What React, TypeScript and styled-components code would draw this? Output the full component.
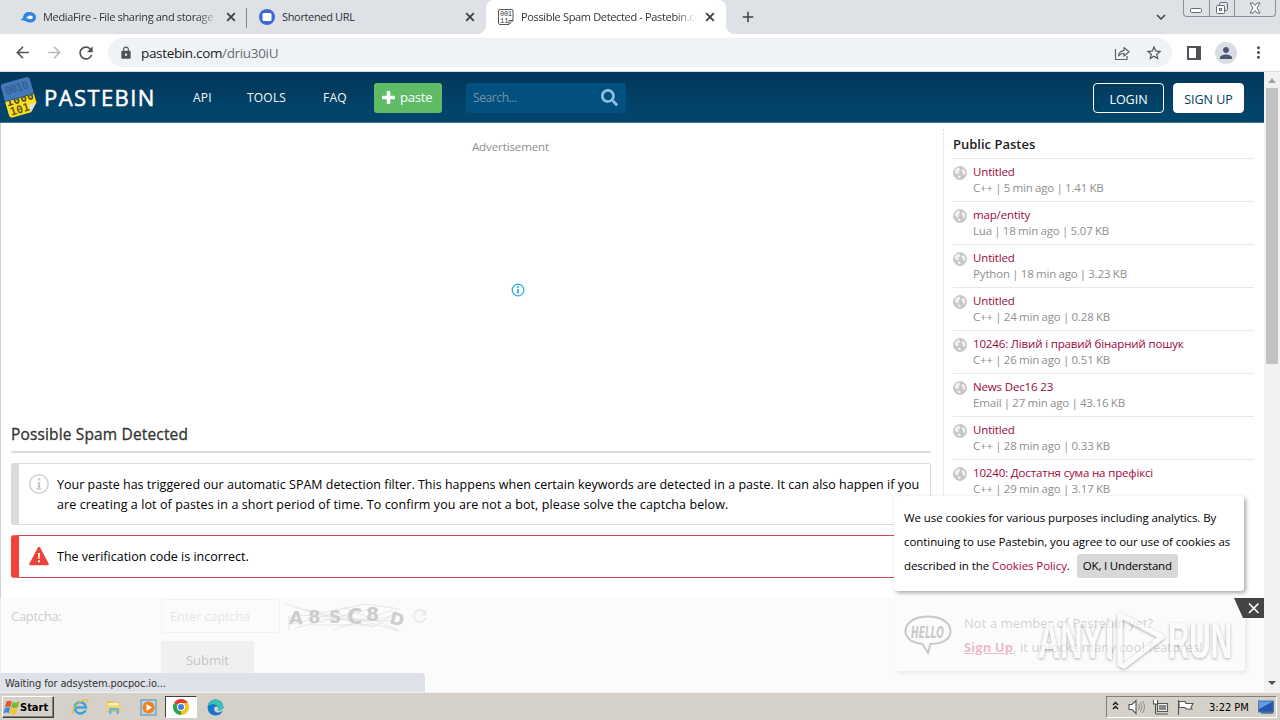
import React from 'react';
import styled, { createGlobalStyle } from 'styled-components';
import {
  MdAdd,
  MdArrowBack,
  MdArrowForward,
  MdKeyboardArrowDown,
  MdLock,
  MdMoreVert,
  MdPerson,
  MdRefresh,
  MdStarBorder,
} from 'react-icons/md';
import { FaSearch } from 'react-icons/fa';

const GlobalStyle = createGlobalStyle`
  * {
    box-sizing: border-box;
  }
  body {
    margin: 0;
    overflow: hidden;
    font-family: 'Open Sans', 'Noto Sans', sans-serif;
    color: #000;
  }
  svg {
    display: block;
    flex-shrink: 0;
  }
`;

const Screen = styled.div`
  position: relative;
  width: 1280px;
  height: 720px;
  display: flex;
  flex-direction: column;
  overflow: hidden;
  background: #fff;
  white-space: nowrap;
`;

/* ---------- browser chrome ---------- */

const TabStrip = styled.div`
  height: 34px;
  flex-shrink: 0;
  display: flex;
  align-items: flex-start;
  padding-left: 8px;
  background: #dee1e6;
`;

const StyledTab = styled.div<{ $active?: boolean }>`
  position: relative;
  width: ${(p) => (p.$active ? 240 : 239)}px;
  height: 34px;
  display: flex;
  align-items: center;
  padding: 0 11px 0 12px;
  border-radius: 8px 8px 0 0;
  background: ${(p) => (p.$active ? '#fff' : 'transparent')};

  &::before,
  &::after {
    content: '';
    display: ${(p) => (p.$active ? 'block' : 'none')};
    position: absolute;
    bottom: 0;
    width: 8px;
    height: 8px;
  }
  &::before {
    left: -8px;
    background: radial-gradient(circle at 0 0, transparent 7.5px, #fff 8px);
  }
  &::after {
    right: -8px;
    background: radial-gradient(circle at 100% 0, transparent 7.5px, #fff 8px);
  }
`;

const TabTitle = styled.span<{ $fade?: boolean }>`
  flex: 1;
  margin: 0 8px 0 7px;
  overflow: hidden;
  font-size: 11px;
  line-height: 16px;
  letter-spacing: -0.34px;
  color: #2f3236;
  ${(p) => p.$fade && 'mask-image: linear-gradient(to right, #000 88%, transparent);'}
`;

const TabDivider = styled.div`
  position: absolute;
  right: 0;
  top: 8px;
  width: 1px;
  height: 20px;
  background: #85898f;
`;

const NewTab = styled(MdAdd)`
  width: 18px;
  height: 18px;
  margin: 8px 0 0 13px;
  color: #3c4043;
`;

const TabSearch = styled(MdKeyboardArrowDown)`
  width: 18px;
  height: 18px;
  margin: 8px 13px 0 auto;
  color: #3c4043;
`;

const WindowButtons = styled.div`
  display: flex;
  height: 17px;
  margin-right: 4px;
  border: 1px solid #8c9098;
  border-top: none;
  border-radius: 0 0 4px 4px;
`;

const WindowButton = styled.div<{ $wide?: boolean }>`
  width: ${(p) => (p.$wide ? 41 : 25)}px;
  display: flex;
  align-items: center;
  justify-content: center;
  & + & {
    border-left: 1px solid #8c9098;
  }
`;

const Toolbar = styled.div`
  height: 38px;
  flex-shrink: 0;
  display: flex;
  align-items: center;
  padding: 0 6px 0 12px;
  border-bottom: 1px solid #d5dade;
  color: #4f5357;
`;

const ToolButton = styled.div<{ $muted?: boolean }>`
  width: 32px;
  display: flex;
  justify-content: center;
  color: ${(p) => (p.$muted ? '#b5b7ba' : 'inherit')};
  &:first-child {
    width: 20px;
    margin-right: 6px;
  }
`;

const AddressBar = styled.div`
  flex: 1;
  height: 29px;
  display: flex;
  align-items: center;
  margin: 0 6px;
  padding: 0 2px 0 11px;
  border-radius: 15px;
  background: #f0f3f6;
`;

const Url = styled.span`
  flex: 1;
  margin-left: 8px;
  font-size: 13.5px;
  letter-spacing: -0.34px;
  color: #202124;
  span {
    color: #686c71;
  }
`;

const Avatar = styled.div`
  width: 22px;
  height: 22px;
  display: flex;
  align-items: center;
  justify-content: center;
  border-radius: 50%;
  background: #dadde4;
  color: #4b5576;
`;

/* ---------- site ---------- */

const Viewport = styled.div`
  position: relative;
  height: 620px;
  flex-shrink: 0;
  display: flex;
`;

const Page = styled.div`
  position: relative;
  width: 1264px;
  overflow: hidden;
`;

const Header = styled.header`
  height: 51px;
  display: flex;
  align-items: center;
  padding: 1px 20px 0 0;
  background: linear-gradient(#02385b, #033d61 45%, #024268 55%, #02456b);
  border-bottom: 1px solid #48718c;
`;

const Brand = styled.div`
  width: 149px;
  margin: -1px 0 0 3px;
  font-size: 22px;
  line-height: 30px;
  letter-spacing: 1.4px;
  color: #fff;
  -webkit-text-stroke: 0.5px #fff;
`;

const NavLink = styled.a<{ $width: number }>`
  width: ${(p) => p.$width}px;
  margin-top: -1px;
  font-size: 12px;
  letter-spacing: 0.2px;
  color: #f3f8fb;
`;

const PasteButton = styled.button`
  width: 68px;
  height: 30px;
  display: flex;
  align-items: center;
  padding: 0 0 1px 8px;
  gap: 5px;
  border: none;
  border-radius: 3px;
  background: #5fbb66;
  color: #fff;
  font: 13px 'Open Sans', sans-serif;
  letter-spacing: -0.2px;
`;

const SearchBox = styled.div`
  width: 160px;
  height: 30px;
  display: flex;
  align-items: center;
  justify-content: space-between;
  margin-left: 24px;
  padding: 0 8px 1px 7px;
  border-radius: 3px;
  background: #01507f;
  color: #7893a5;
  font-size: 12px;
  letter-spacing: -0.4px;
`;

const AuthButtons = styled.div`
  display: flex;
  gap: 9px;
  margin-left: auto;
`;

const AuthButton = styled.button<{ $filled?: boolean }>`
  width: 71px;
  height: 30px;
  padding: 3px 0 0;
  border: 1px solid #fff;
  border-radius: 4px;
  background: ${(p) => (p.$filled ? '#fff' : 'transparent')};
  color: ${(p) => (p.$filled ? '#033a5c' : '#fff')};
  font: 12.5px 'Open Sans', sans-serif;
`;

const Content = styled.div`
  height: 569px;
  display: flex;
  border-left: 1px solid #cfd2d6;
`;

const Main = styled.main`
  width: 942px;
  padding: 0 12px 0 10px;
`;

const AdSlot = styled.div`
  height: 301px;
  display: flex;
  flex-direction: column;
  align-items: center;
  padding: 16px 0 0 79px;
  font-size: 11.5px;
  line-height: 16px;
  letter-spacing: -0.1px;
  color: #8e8e8e;
`;

const AdInfo = styled.svg`
  margin: 128px 0 0 15px;
`;

const Title = styled.h1`
  height: 29px;
  margin: 0 0 10px;
  border-bottom: 2px solid #dcdcdc;
  font-size: 15.5px;
  font-weight: 400;
  line-height: 21px;
  letter-spacing: 0.15px;
  color: #333;
  -webkit-text-stroke: 0.3px #333;
`;

const Notice = styled.div<{ $error?: boolean }>`
  display: flex;
  align-items: flex-start;
  margin-bottom: 10px;
  padding: 11px 0 ${(p) => (p.$error ? 10 : 9)}px 10px;
  border: 1px solid ${(p) => (p.$error ? '#cf4550' : '#dbdbdb')};
  border-left: 8px solid ${(p) => (p.$error ? '#f44336' : '#dbdbdb')};
  border-radius: 3px;
  font-size: 12.5px;
  line-height: 20px;
  svg {
    margin-top: -1px;
  }
`;

const NoticeText = styled.div`
  margin-left: 8px;
`;

const NoticeLine = styled.div<{ $tracking?: number }>`
  letter-spacing: ${(p) => p.$tracking ?? 0}px;
`;

const CaptchaRow = styled.div`
  display: flex;
  align-items: center;
  height: 34px;
  margin-top: 21px;
  font-size: 13px;
  color: #666;
`;

const CaptchaLabel = styled.label`
  width: 150px;
  letter-spacing: -0.3px;
`;

const CaptchaInput = styled.div`
  width: 119px;
  height: 34px;
  margin-right: 3px;
  padding: 7px 8px;
  border: 1px solid #e2e2e2;
  border-radius: 3px;
  line-height: 18px;
  letter-spacing: -0.25px;
  color: #b5b5b5;
`;

const SubmitButton = styled.button`
  display: block;
  width: 93px;
  height: 38px;
  margin: 8px 0 0 150px;
  padding: 0;
  border: none;
  border-radius: 3px;
  background: #dadada;
  color: #444;
  font: 13px 'Open Sans', sans-serif;
`;

const Sidebar = styled.aside`
  width: 311px;
  height: 380px;
  margin-top: 6px;
  padding-left: 9px;
  border-left: 1px dotted #d8d8d8;
`;

const SidebarTitle = styled.div`
  height: 29px;
  padding-top: 5px;
  font-size: 13px;
  font-weight: 600;
  line-height: 20px;
  color: #222;
`;

const PasteItem = styled.div`
  height: 43px;
  display: flex;
  padding-top: 5px;
  border-top: 1px solid #e8e8e8;
  font-size: 11.5px;
  line-height: 16px;
  letter-spacing: -0.15px;
`;

const PasteGlobe = styled.div`
  padding-top: 2px;
`;

const PasteBody = styled.div`
  margin-left: 6px;
`;

const PasteLink = styled.a`
  display: block;
  color: #9b0838;
`;

const PasteMeta = styled.div`
  letter-spacing: -0.15px;
  word-spacing: -0.5px;
  color: #8f8f8f;
`;

const AdOverlay = styled.div`
  position: absolute;
  left: 0;
  right: 0;
  top: 526px;
  bottom: 0;
  background: rgba(250, 250, 250, 0.7);
`;

const OverlayClose = styled.svg`
  position: absolute;
  right: 0;
  top: 0;
`;

const JoinCard = styled.div`
  position: absolute;
  left: 895px;
  top: 527px;
  width: 350px;
  height: 72px;
  display: flex;
  align-items: center;
  padding-left: 9px;
  border-radius: 3px;
  background: #fff;
  box-shadow: 2px 2px 4px rgba(0, 0, 0, 0.25);
  font-size: 13px;
  line-height: 24px;
  letter-spacing: 0.08px;
  color: #777;
`;

const JoinText = styled.div`
  margin-left: 12px;
  a {
    color: #d0245c;
    font-weight: 700;
    text-decoration: underline;
  }
`;

const CookieCard = styled.div`
  position: absolute;
  left: 894px;
  top: 424px;
  width: 350px;
  height: 95px;
  padding: 10px;
  border-radius: 3px;
  background: #fff;
  box-shadow: 2px 2px 4px rgba(0, 0, 0, 0.35);
  font-size: 11.5px;
  line-height: 24px;
  letter-spacing: -0.07px;
  a {
    color: #a8053c;
  }
`;

const CookieLine = styled.div`
  display: flex;
  align-items: center;
`;

const AcceptButton = styled.button`
  width: 101px;
  height: 24px;
  margin-left: 7px;
  padding: 0 0 1px;
  border: none;
  border-radius: 3px;
  background: #d8d8d8;
  font: 11.5px 'Open Sans', sans-serif;
  letter-spacing: -0.17px;
`;

const StatusBubble = styled.div`
  position: absolute;
  left: 0;
  bottom: 0;
  width: 425px;
  height: 19px;
  padding-left: 5px;
  border-radius: 0 4px 0 0;
  background: #dee1e7;
  font: 11px/21px 'DejaVu Sans Condensed', 'DejaVu Sans', sans-serif;
  letter-spacing: -0.13px;
  color: #333;
`;

const ScrollBar = styled.div`
  width: 16px;
  display: flex;
  flex-direction: column;
  align-items: center;
  padding: 5px 0;
  background: #f1f1f1;
`;

const ScrollThumb = styled.div`
  width: 12px;
  height: 276px;
  margin: 5px 0 auto;
  background: #c1c1c1;
`;

const Watermark = styled.svg`
  position: absolute;
  left: 1030px;
  top: 604px;
`;

/* ---------- taskbar ---------- */

const TaskBar = styled.div`
  height: 28px;
  display: flex;
  align-items: center;
  padding: 1px 3px 0 2px;
  border-top: 1px solid #f4f2ee;
  background: #d5d0c8;
  font-family: 'DejaVu Sans Condensed', 'DejaVu Sans', sans-serif;
  font-size: 11px;
`;

const StartButton = styled.div`
  width: 52px;
  height: 22px;
  display: flex;
  align-items: center;
  border: 1px solid;
  border-color: #fff #404040 #404040 #fff;
  box-shadow: inset -1px -1px #808080;
  font-weight: 700;
`;

const TaskItem = styled.div<{ $active?: boolean }>`
  width: 32px;
  height: 22px;
  display: flex;
  align-items: center;
  justify-content: center;
  margin-left: ${(p) => (p.$active ? 1 : 2)}px;
  border: 1px solid;
  border-color: ${(p) => (p.$active ? '#404040 #fff #fff #404040' : 'transparent')};
  background: ${(p) => (p.$active ? '#fff' : 'transparent')};
`;

const QuickLaunch = styled.div`
  display: flex;
  margin-left: 8px;
`;

const Tray = styled.div`
  width: 171px;
  height: 22px;
  display: flex;
  align-items: center;
  margin-left: auto;
  border: 1px solid;
  border-color: #808080 #fff #fff #808080;
  padding: 0 1px 0 4px;
`;

const Clock = styled.span`
  margin: 0 9px 0 15px;
`;

const pastes = [
  { title: 'Untitled', meta: 'C++ | 5 min ago | 1.41 KB' },
  { title: 'map/entity', meta: 'Lua | 18 min ago | 5.07 KB' },
  { title: 'Untitled', meta: 'Python | 18 min ago | 3.23 KB' },
  { title: 'Untitled', meta: 'C++ | 24 min ago | 0.28 KB' },
  { title: '10246: Лівий і правий бінарний пошук', meta: 'C++ | 26 min ago | 0.51 KB' },
  { title: 'News Dec16 23', meta: 'Email | 27 min ago | 43.16 KB' },
  { title: 'Untitled', meta: 'C++ | 28 min ago | 0.33 KB' },
  { title: '10240: Достатня сума на префіксі', meta: 'C++ | 29 min ago | 3.17 KB' },
];

const CloseIcon = () => (
  <svg width="10" height="10" viewBox="0 0 10 10">
    <path d="M1.200 1.200l7.600 7.600M8.800 1.200L1.200 8.800" stroke="#3c4043" strokeWidth="1.800" />
  </svg>
);

const MediaFireIcon = () => (
  <svg width="16" height="16" viewBox="0 0 16 16">
    <path d="M0 10.500c2.500-.2 2.500-1 3.200-3C4 5 5.500 3 9 3c4 0 7 2 7 5.200S13.500 13.500 10 13.500c-2.500 0-3.500-1.200-5.500-1.700-1.700-.4-3-.2-4.500-1.300z" fill="#2d86dd" />
    <path d="M6 8.800c1.500-.2 2-2.300 4.300-2.300 1.500 0 2.500.7 2.500 1.800s-1 1.900-2.500 1.900C8.300 10.200 7.500 9 6 8.800z" fill="#fff" />
  </svg>
);

const ShortUrlIcon = () => (
  <svg width="16" height="16" viewBox="0 0 16 16">
    <circle cx="8" cy="8" r="8" fill="#3f68d4" />
    <rect x="3.500" y="4" width="9" height="8" rx="1.500" fill="#fff" />
  </svg>
);

const PastebinIcon = () => (
  <svg width="16" height="16" viewBox="0 0 16 16">
    <path d="M2 .5h11.500a1.500 1.500 0 0 1 1.500 1.500v9.500L11 15.500H2A1.500 1.500 0 0 1 .5 14V2A1.500 1.500 0 0 1 2 .5zM11 15v-3.500h4" fill="#fff" stroke="#555" />
    <g fill="#333" fontFamily="Liberation Mono, monospace" fontSize="7">
      <text x="2" y="7" textLength="12">001</text>
      <text x="2" y="13.500" textLength="8.500">11</text>
    </g>
  </svg>
);

const ShareIcon = () => (
  <svg width="16" height="16" viewBox="0 0 16 16" fill="none" stroke="#5f6368" strokeWidth="1.200">
    <path d="M1.500 4v10.500h11.500v-3.500" />
    <path d="M4.500 11c.4-3.500 2.500-5.200 5.500-5.400V2.500l5 4.300-5 4.200V8.300C7.500 8.300 6 9 4.500 11z" strokeLinejoin="round" />
  </svg>
);

const SidePanelIcon = () => (
  <svg width="14" height="14" viewBox="0 0 14 14">
    <path d="M1 1h12v12H1z" fill="none" stroke="#4f5357" strokeWidth="2" />
    <path d="M9 0h5v14H9z" fill="#4f5357" />
  </svg>
);

const PlusIcon = () => (
  <svg width="13" height="13" viewBox="0 0 13 13">
    <path d="M6.500 1v11M1 6.500h11" stroke="#fff" strokeWidth="3.600" strokeLinecap="round" />
  </svg>
);

const Logo = () => (
  <svg width="41" height="48" viewBox="0 0 41 48">
    <g transform="translate(0.500 0.500) rotate(-16 20 23)">
      <path d="M4 8a3 3 0 0 1 3-3h24a3 3 0 0 1 3 3v13H4z" fill="#4379bb" />
      <path d="M4 23h30v9l-8 8H7a3 3 0 0 1-3-3z" fill="#fbdf1e" />
      <path d="M34 32l-8 8v-6a2 2 0 0 1 2-2z" fill="#d9dfe4" />
      <g fontFamily="DejaVu Sans Mono, monospace" fontWeight="700" fontSize="11">
        <text x="7" y="16.500" fill="#356297" textLength="24">0010</text>
        <text x="5" y="28" fill="#4a4a28" textLength="28">1000</text>
        <text x="6" y="38" fill="#6a5a10" textLength="20">101</text>
      </g>
      <path d="M4 18.500h30v4H4z" fill="#4379bb" />
    </g>
  </svg>
);

const GlobeIcon = () => (
  <svg width="14" height="14" viewBox="0 0 14 14">
    <circle cx="7" cy="7" r="6.500" fill="#c6c6c6" stroke="#c9c9c9" />
    <path d="M1.800 5C3 2.500 4.800 1.500 7 1.500L6.500 3l.8 1-1.800 1.500.5 1.500L4.500 8.500 2 7zM9 3l2.500 1 1 3-1 2-1.500-.5L9.500 6 8.500 5zM4.500 9.500l3 .3L7.500 12 5.500 12z" fill="#f1f1f1" />
  </svg>
);

const InfoIcon = () => (
  <svg width="20" height="20" viewBox="0 0 20 20">
    <circle cx="10" cy="10" r="9.200" fill="none" stroke="#d2d2d2" strokeWidth="1.600" />
    <path d="M8 8.200h3.200v6h1.300v1.200h-5v-1.200H9V9.200H8zM9 4.300h2.200v2.200H9z" fill="#c8c8c8" />
  </svg>
);

const WarningIcon = () => (
  <svg width="20" height="20" viewBox="0 0 20 20">
    <path d="M10 .8c.5 0 .9.300 1.100.700l8.600 16.200c.4.800-.1 1.500-.9 1.500H1.200c-.8 0-1.300-.7-.9-1.500L8.900 1.500c.2-.4.600-.7 1.100-.7z" fill="#ee4238" />
    <path d="M9 7h2l-.4 6H9.400zM9 14.300h2v2H9z" fill="#fff" />
  </svg>
);

const CaptchaImage = () => (
  <svg width="127" height="34" viewBox="0 0 127 34">
    <g fill="none" stroke="#999" strokeWidth="0.700">
      <path d="M1 4l32 11 50-10 34 5M6 26l46-12 64 18M5 19c30-9 70 10 116-4M12 29l80-20M20 10l70 18 24-16M50 31l60-20M60 8l55 23M6 32V17M30 26h60M40 20l70 2" />
    </g>
    <g fill="#666" fontFamily="DejaVu Sans, sans-serif" fontWeight="700" fontSize="18">
      <text x="6" y="25" fontSize="18" transform="rotate(3 13 20)">A</text>
      <text x="25" y="24" fontSize="18">8</text>
      <text x="46" y="24" fontSize="17">S</text>
      <text x="64" y="25" fontSize="21">C</text>
      <text x="83" y="22" fontSize="19">8</text>
      <text x="107" y="26" fontSize="17" transform="rotate(12 113 20)">D</text>
    </g>
  </svg>
);

const HelloIcon = () => (
  <svg width="48" height="40" viewBox="0 0 48 40">
    <path d="M24 1.500C11 1.500 1.500 7.500 1.500 16c0 7.500 6 11.500 17 13l5.500 9 2.500-9C38 28.500 46.500 24.500 46.500 16 46.500 7.500 37 1.500 24 1.500z" fill="#fff" stroke="#555" strokeWidth="2" />
    <text x="7" y="22.500" textLength="33" lengthAdjust="spacingAndGlyphs" fontFamily="DejaVu Sans Condensed, sans-serif" fontWeight="700" fontStyle="italic" fontSize="16" fill="#555">
      HELLO
    </text>
  </svg>
);

const WindowsFlag = () => (
  <svg width="17" height="17" viewBox="0 0 17 17">
    <path d="M3.500 2.500C5.500 1.300 7.300 1.500 8.800 2.500L7.400 8C5.800 7.200 4.200 7.200 2 8.200z" fill="#e8542c" />
    <path d="M9.600 3c2 1 4 .9 6.700-.4L14.800 8.200c-2.700 1.200-4.800 1.200-6.700.1z" fill="#7db928" />
    <path d="M1.800 9c2.200-1 3.800-1 5.300-.2L5.800 14.200C4.200 13.300 2.700 13.300.4 14.400z" fill="#3b8ede" />
    <path d="M7.900 9.200c2 .9 4 .9 6.600-.1l-1.400 5.400c-2.600 1.100-4.600 1.100-6.500.1z" fill="#f8c324" />
  </svg>
);

const IeIcon = () => (
  <svg width="18" height="18" viewBox="0 0 18 18" fill="none">
    <path d="M14.500 12.200A5.600 5.600 0 1 1 15 9.500H5" stroke="#38a4dc" strokeWidth="2.600" />
    <path d="M2.500 16C-.5 15 4 7 9 4s9-3.500 7.300.5" stroke="#e9bd3c" strokeWidth="1.300" />
  </svg>
);

const FolderIcon = () => (
  <svg width="18" height="18" viewBox="0 0 18 18">
    <path d="M2 3h5l1 1.500h7V14H2z" fill="#e6c252" />
    <path d="M3 5h11v6H3z" fill="#fbeeb2" />
    <path d="M2 7.500h14V13H2z" fill="#f0d26a" />
    <path d="M4 16v-4.500a1.500 1.500 0 0 1 1.500-1.500h7a1.500 1.500 0 0 1 1.500 1.500V16h-2.500v-3.500h-5V16z" fill="#67b4dc" />
  </svg>
);

const PlayerIcon = () => (
  <svg width="17" height="17" viewBox="0 0 17 17">
    <rect x="1" y="1" width="15" height="15" fill="#b6d6ee" stroke="#5b8ab0" />
    <circle cx="8.500" cy="8.500" r="6" fill="#f08219" />
    <path d="M6.500 5l5.500 3.500L6.500 12z" fill="#fff" />
  </svg>
);

const ChromeIcon = () => (
  <svg width="16" height="16" viewBox="0 0 16 16">
    <path d="M8 8L1.070 4A8 8 0 0 1 14.930 4z" fill="#e33b2e" />
    <path d="M8 8l6.930-4A8 8 0 0 1 8 16z" fill="#fbc116" />
    <path d="M8 8v8A8 8 0 0 1 1.070 4z" fill="#2ba24c" />
    <path d="M8 4h6.930L11.500 10z" fill="#fbc116" />
    <circle cx="8" cy="8" r="4" fill="#fff" />
    <circle cx="8" cy="8" r="3" fill="#3f7ee8" />
  </svg>
);

const EdgeIcon = () => (
  <svg width="17" height="17" viewBox="0 0 17 17">
    <circle cx="8.500" cy="8.500" r="8" fill="#1477cf" />
    <path d="M.6 7.500A8 8 0 0 1 16.500 8c.2 3-2 4-4 4-1.500 0-2-.6-1.500-1.500C12 8 9.500 5 6 5.200 3.500 5.300 1.500 6.200.6 7.500z" fill="#37c0b4" />
    <path d="M7.500 8c-1.500 3 1 6 4 5.500 1.500-.1 3-.8 3.800-1.500l1.200.5L17 9l-4 3c-2 .2-2.500-.6-2-1.500.5-1.200 0-2.500-1-3z" fill="#d5d0c8" />
  </svg>
);

const TrayIcons = () => (
  <svg width="83" height="20" viewBox="0 0 83 20" fill="none" stroke="#555" strokeWidth="1.100">
    <path d="M2 8l2.500-2.500L7 8M2 12l2.500-2.500L7 12" stroke="#111" strokeWidth="1.400" />
    <path d="M18 7.500h3l4-4v13l-4-4h-3z" fill="#fff" />
    <path d="M27.500 7q2 3 0 6M29.500 5.500q3 4.500 0 9M31.500 4q4 6 0 12" strokeWidth="0.900" stroke="#888" />
    <path d="M46.500 6.500h10v8h-10zM45 17h12" fill="#eee" />
    <path d="M48 8h7v5h-7z" fill="#888" stroke="none" />
    <path d="M42.500 3v4h4V3M44.500 7v10" fill="#fff" />
    <path d="M67.500 3v15M68 4.500h6l1 2h7l-2 4 1 1.500h-6l-1-1.500h-6z" fill="#fff" />
  </svg>
);

const DesktopIcon = () => (
  <svg width="16" height="16" viewBox="0 0 16 16">
    <rect x="0.500" y="2" width="15" height="11" fill="#2558ad" stroke="#5277a5" />
    <path d="M1 2.500h14L1 10z" fill="#5f9cf0" />
    <path d="M3 14h12" stroke="#123a70" />
  </svg>
);

const App = () => {
  return (
    <Screen>
      <GlobalStyle />
      <TabStrip>
        <StyledTab>
          <MediaFireIcon />
          <TabTitle $fade>MediaFire - File sharing and storage</TabTitle>
          <CloseIcon />
          <TabDivider />
        </StyledTab>
        <StyledTab>
          <ShortUrlIcon />
          <TabTitle>Shortened URL</TabTitle>
          <CloseIcon />
        </StyledTab>
        <StyledTab $active>
          <PastebinIcon />
          <TabTitle $fade>Possible Spam Detected - Pastebin.com</TabTitle>
          <CloseIcon />
        </StyledTab>
        <NewTab />
        <TabSearch />
        <WindowButtons>
          <WindowButton>
            <svg width="13" height="16" fill="none" stroke="#666b75">
              <rect x="0.500" y="8.500" width="11" height="4" rx="1" fill="#fff" />
            </svg>
          </WindowButton>
          <WindowButton>
            <svg width="14" height="16" fill="none" stroke="#666b75">
              <rect x="4.500" y="2.500" width="8" height="8" rx="1" />
              <rect x="1.500" y="5.500" width="8" height="8" rx="1" fill="#fff" />
              <rect x="4.500" y="8.500" width="2" height="2" />
            </svg>
          </WindowButton>
          <WindowButton $wide>
            <svg width="12" height="16" fill="#fff" stroke="#666b75">
              <path d="M1 3h3l2 2.500L8 3h3L8 8l3 5H8l-2-2.500L4 13H1l3-5z" />
            </svg>
          </WindowButton>
        </WindowButtons>
      </TabStrip>

      <Toolbar>
        <ToolButton>
          <MdArrowBack size={19} />
        </ToolButton>
        <ToolButton $muted>
          <MdArrowForward size={19} />
        </ToolButton>
        <ToolButton>
          <MdRefresh size={20} />
        </ToolButton>
        <AddressBar>
          <MdLock size={14} />
          <Url>
            pastebin.com<span>/driu30iU</span>
          </Url>
          <ToolButton>
            <ShareIcon />
          </ToolButton>
          <ToolButton>
            <MdStarBorder size={18} />
          </ToolButton>
        </AddressBar>
        <ToolButton>
          <SidePanelIcon />
        </ToolButton>
        <ToolButton>
          <Avatar>
            <MdPerson size={18} />
          </Avatar>
        </ToolButton>
        <ToolButton>
          <MdMoreVert size={19} />
        </ToolButton>
      </Toolbar>

      <Viewport>
        <Page>
          <Header>
            <Logo />
            <Brand>PASTEBIN</Brand>
            <NavLink $width={54}>API</NavLink>
            <NavLink $width={76}>TOOLS</NavLink>
            <NavLink $width={51}>FAQ</NavLink>
            <PasteButton>
              <PlusIcon />
              paste
            </PasteButton>
            <SearchBox>
              Search...
              <FaSearch size={17} color="#93bfdd" />
            </SearchBox>
            <AuthButtons>
              <AuthButton>LOGIN</AuthButton>
              <AuthButton $filled>SIGN UP</AuthButton>
            </AuthButtons>
          </Header>

          <Content>
            <Main>
              <AdSlot>
                Advertisement
                <AdInfo width="14" height="14" viewBox="0 0 14 14">
                  <circle cx="7" cy="7" r="5.800" fill="#fff" stroke="#23b4d8" strokeWidth="1.300" />
                  <path d="M6.200 6h1.600v4.500H6.200zM6.200 3.300h1.600v1.600H6.200z" fill="#1aa9d0" />
                </AdInfo>
              </AdSlot>
              <Title>Possible Spam Detected</Title>
              <Notice>
                <InfoIcon />
                <NoticeText>
                  <NoticeLine $tracking={0.015}>
                    Your paste has triggered our automatic SPAM detection filter. This happens when certain keywords
                    are detected in a paste. It can also happen if you
                  </NoticeLine>
                  <NoticeLine $tracking={0.09}>
                    are creating a lot of pastes in a short period of time. To confirm you are not a bot, please solve
                    the captcha below.
                  </NoticeLine>
                </NoticeText>
              </Notice>
              <Notice $error>
                <WarningIcon />
                <NoticeText>
                  <NoticeLine>The verification code is incorrect.</NoticeLine>
                </NoticeText>
              </Notice>
              <CaptchaRow>
                <CaptchaLabel>Captcha:</CaptchaLabel>
                <CaptchaInput>Enter captcha</CaptchaInput>
                <CaptchaImage />
                <MdRefresh size={20} color="#bbb" />
              </CaptchaRow>
              <SubmitButton>Submit</SubmitButton>
            </Main>

            <Sidebar>
              <SidebarTitle>Public Pastes</SidebarTitle>
              {pastes.map((paste, i) => (
                <PasteItem key={i}>
                  <PasteGlobe>
                    <GlobeIcon />
                  </PasteGlobe>
                  <PasteBody>
                    <PasteLink>{paste.title}</PasteLink>
                    <PasteMeta>{paste.meta}</PasteMeta>
                  </PasteBody>
                </PasteItem>
              ))}
            </Sidebar>
          </Content>

          <JoinCard>
            <HelloIcon />
            <JoinText>
              Not a member of Pastebin yet?
              <br />
              <a>Sign Up</a>, it unlocks many cool features!
            </JoinText>
          </JoinCard>
          <AdOverlay>
            <OverlayClose width="30" height="20" viewBox="0 0 30 20">
              <path d="M0 0h30v20H9z" fill="#454545" />
              <path d="M15 5.500l9.500 9.500M24.500 5.500L15 15" stroke="#fff" strokeWidth="1.600" />
            </OverlayClose>
          </AdOverlay>
          <CookieCard>
            <CookieLine>We use cookies for various purposes including analytics. By</CookieLine>
            <CookieLine>continuing to use Pastebin, you agree to our use of cookies as</CookieLine>
            <CookieLine>
              <span>
                described in the <a>Cookies Policy</a>.
              </span>
              <AcceptButton>OK, I Understand</AcceptButton>
            </CookieLine>
          </CookieCard>
          <StatusBubble>Waiting for adsystem.pocpoc.io...</StatusBubble>
        </Page>

        <ScrollBar>
          <svg width="8" height="6">
            <path d="M0 6l4-5 4 5z" fill="#a3a3a3" />
          </svg>
          <ScrollThumb />
          <svg width="8" height="8">
            <path d="M0 2l4 4 4-4z" fill="#505050" />
          </svg>
        </ScrollBar>
      </Viewport>

      <TaskBar>
        <StartButton>
          <WindowsFlag />
          Start
        </StartButton>
        <QuickLaunch>
          <TaskItem>
            <IeIcon />
          </TaskItem>
          <TaskItem>
            <FolderIcon />
          </TaskItem>
          <TaskItem>
            <PlayerIcon />
          </TaskItem>
          <TaskItem $active>
            <ChromeIcon />
          </TaskItem>
          <TaskItem>
            <EdgeIcon />
          </TaskItem>
        </QuickLaunch>
        <Tray>
          <TrayIcons />
          <Clock>3:22 PM</Clock>
          <DesktopIcon />
        </Tray>
      </TaskBar>

      <Watermark width="210" height="72" viewBox="0 0 210 72">
        <defs>
          <filter id="soft" x="-10%" y="-10%" width="120%" height="120%">
            <feDropShadow dx="0" dy="1" stdDeviation="1.800" floodColor="#555" floodOpacity="0.900" />
          </filter>
        </defs>
        <g filter="url(#soft)" fill="#fcfcfc" opacity="0.550" fontFamily="Liberation Sans, Arial, sans-serif" fontWeight="700" fontSize="50">
          <text x="8" y="54" textLength="65" lengthAdjust="spacingAndGlyphs">ANY</text>
          <text x="138" y="54" textLength="64" lengthAdjust="spacingAndGlyphs">RUN</text>
          <path d="M77 18l5-2v40l-5-2z" />
          <path d="M90 11l42 22-38 29-4-2z" fill="none" stroke="#fcfcfc" strokeWidth="5" strokeLinejoin="round" />
        </g>
      </Watermark>
    </Screen>
  );
};

export default App;
